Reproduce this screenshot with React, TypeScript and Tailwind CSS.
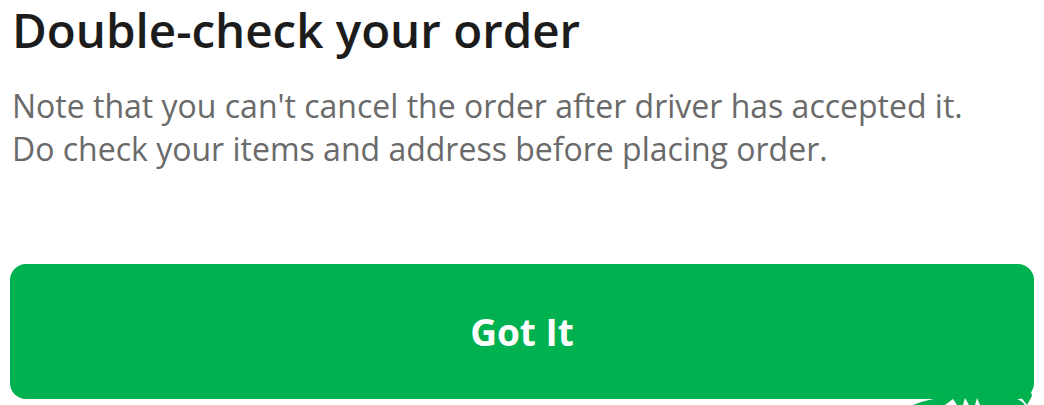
export default function App() {
  return (
    <div className="relative w-[1044px] h-[405px] overflow-hidden bg-white" style={{ fontFamily: '"Open Sans", "Noto Sans", sans-serif' }}>
      <div className="pl-[12px]">
        <h1 className="text-[47.5px] leading-[60px] font-semibold text-[#1c1c1c]">Double-check your order</h1>
        <p className="mt-[24px] text-[32px] leading-[43px] text-[#6a6a6a]">
          Note that you can't cancel the order after driver has accepted it.
          <br />
          Do check your items and address before placing order.
        </p>
      </div>
      <div className="px-[10px] mt-[94px]">
        <button className="w-full h-[135px] rounded-[16px] bg-[#00b14f] flex items-center justify-center text-white text-[37px] font-bold">
          Got It
        </button>
      </div>
      <svg className="absolute left-[905px] top-[384px]" width="139" height="21" viewBox="0 0 139 21">
        <path d="M8 21 C30 12 60 10 90 11 C105 12 115 14 120 21 Z" fill="#00b14f" />
        <path d="M115 12 L125 4 L127 12 L122 21 Z" fill="#00b14f" />
        <path d="M40 21 L48 15 L52 21 M58 21 L60 14 L64 21 M70 21 L72 14 L75 21" fill="#ffffff" />
      </svg>
    </div>
  );
}
